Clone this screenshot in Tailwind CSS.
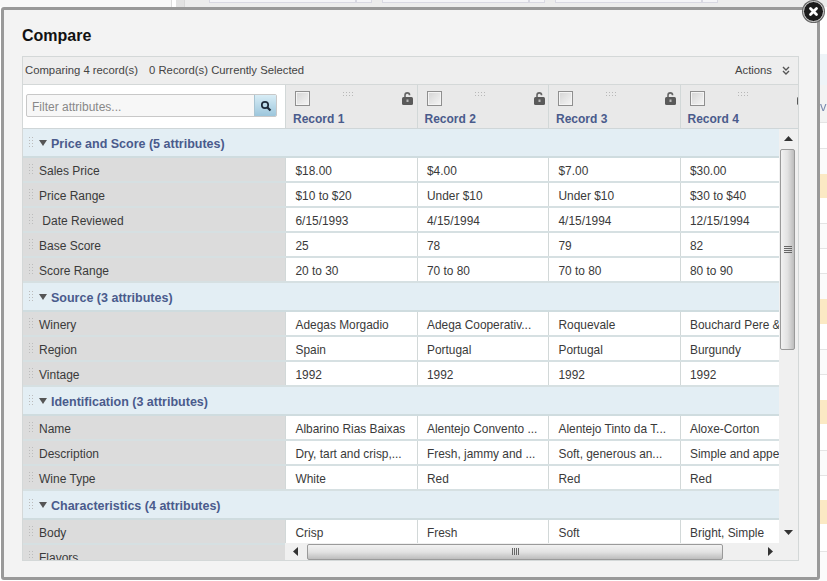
<!DOCTYPE html>
<html lang="en">
<head>
  <meta charset="UTF-8" />
  <title>Compare</title>
  <script src="https://cdn.jsdelivr.net/npm/@tailwindcss/browser@4"></script>
</head>
<body class="w-[827px] h-[581px] overflow-hidden bg-white font-['Liberation_Sans',Arial,sans-serif] text-[12px] text-[#3a3a3a]">
<div class="relative w-[827px] h-[581px] blur-[0.4px]">

  <!-- page behind the dialog -->
  <div class="h-[7px] flex">
    <div class="w-[172px] bg-[#f8f8f8] border-r border-[#ddd]"></div>
    <div class="w-[4px] bg-white"></div>
    <div class="w-[8px] bg-[#e2e2e2]"></div>
    <div class="flex-1 flex pl-[24px] bg-[#ececec] border-l border-[#d8d8d8]">
      <div class="w-[147px] h-[3px] bg-[#f4f4f7] border border-t-0 border-[#d8d8e2]"></div>
      <div class="w-[16px] h-[3px] bg-[#f4f4f7] border border-t-0 border-[#d8d8e2]"></div>
      <div class="ml-[10px] w-[147px] h-[3px] bg-[#f4f4f7] border border-t-0 border-[#d8d8e2]"></div>
      <div class="w-[16px] h-[3px] bg-[#f4f4f7] border border-t-0 border-[#d8d8e2]"></div>
      <div class="ml-[10px] w-[147px] h-[3px] bg-[#f4f4f7] border border-t-0 border-[#d8d8e2]"></div>
      <div class="w-[16px] h-[3px] bg-[#f4f4f7] border border-t-0 border-[#d8d8e2]"></div>
    </div>
  </div>
  <div class="flex flex-col items-end mt-[47px]">
    <div class="w-[7px] h-[31px] bg-[#eef4f8]"></div>
    <div class="w-[7px] h-[37px] bg-[#f3f3f3] text-[13px] leading-[44px] text-[#7d8cb0] overflow-hidden">v</div>
    <div class="w-[7px] h-[26px] bg-white border-t border-[#e4e4e4]"></div>
    <div class="w-[7px] h-[26px] bg-[#fbfbfb] border-t border-[#e4e4e4]"></div>
    <div class="w-[7px] h-[24px] bg-[#fbe9c4]"></div>
    <div class="w-[7px] h-[25px] bg-white"></div>
    <div class="w-[7px] h-[25px] bg-[#fbfbfb] border-t border-[#e4e4e4]"></div>
    <div class="w-[7px] h-[25px] bg-white border-t border-[#e4e4e4]"></div>
    <div class="w-[7px] h-[26px] bg-[#fbfbfb] border-t border-[#e4e4e4]"></div>
    <div class="w-[7px] h-[25px] bg-[#fbe9c4]"></div>
    <div class="w-[7px] h-[25px] bg-white"></div>
    <div class="w-[7px] h-[25px] bg-[#fbfbfb] border-t border-[#e4e4e4]"></div>
    <div class="w-[7px] h-[26px] bg-white border-t border-[#e4e4e4]"></div>
    <div class="w-[7px] h-[24px] bg-[#fbe9c4]"></div>
    <div class="w-[7px] h-[26px] bg-white"></div>
    <div class="w-[7px] h-[25px] bg-[#fbfbfb] border-t border-[#e4e4e4]"></div>
    <div class="w-[7px] h-[25px] bg-white border-t border-[#e4e4e4]"></div>
    <div class="w-[7px] h-[24px] bg-[#fbe9c4]"></div>
    <div class="w-[7px] h-[27px] bg-white"></div>
    <div class="w-[7px] h-[30px] bg-[#fbfbfb] border-t border-[#e4e4e4]"></div>
  </div>

  <!-- dialog -->
  <div class="absolute left-[1px] top-[7px] w-[819px] h-[573px] bg-[#f3f3f3] border-[3px] border-[#999] rounded-[3px]">
    <h1 class="ml-[18px] mt-[16px] h-[20px] leading-[20px] text-[16px] font-bold text-[#111]">Compare</h1>

    <div class="ml-[18px] mt-[10px] w-[777px] h-[505px] border border-[#d4d8d8] bg-[#eeeeee] flex flex-col">
      <!-- toolbar -->
      <div class="h-[28px] shrink-0 flex items-center pl-[2px] pr-[8px] text-[11.3px] border-b border-[#d4d8d8] text-[#444]">
        <span>Comparing 4 record(s)</span>
        <span class="ml-[11px]">0 Record(s) Currently Selected</span>
        <span class="ml-auto">Actions</span>
        <svg class="ml-[10px]" width="8" height="9" viewBox="0 0 8 9" fill="none" stroke="#555" stroke-width="1.4"><path d="M1 1l3 3 3-3M1 5l3 3 3-3"/></svg>
      </div>

      <!-- header row -->
      <div class="h-[44px] shrink-0 flex overflow-hidden border-b border-[#cfd6d8]">
        <div class="w-[262px] shrink-0 bg-white flex items-center pl-[3px]">
          <div class="w-[251px] h-[23px] mt-[-2px] flex rounded-[2px] border border-[#c8c8c8] bg-[#f7f7f7] overflow-hidden">
            <span class="flex-1 pl-[5px] leading-[24px] text-[#888]">Filter attributes...</span>
            <span class="w-[22px] flex items-center justify-center bg-linear-to-b from-[#d8edf6] to-[#9cc6dc] border-l border-[#a8c4d2]">
              <svg width="12" height="12" viewBox="0 0 12 12" fill="none" stroke="#1d2a3a"><circle cx="5" cy="5" r="3.2" stroke-width="1.7"/><path d="M7.5 7.5l3 3" stroke-width="2.2"/></svg>
            </span>
          </div>
        </div>
        <div id="heads" class="flex"></div>
      </div>

      <!-- body -->
      <div class="relative flex-1 overflow-hidden">
        <div id="rows" class="w-[757px] overflow-hidden"></div>

        <!-- vertical scrollbar -->
        <div class="absolute right-0 top-0 w-[19px] h-[415px] bg-[#f0f0f0] flex flex-col items-center">
          <svg class="mt-[7px] shrink-0" width="9" height="5" viewBox="0 0 9 5" fill="#333"><path d="M4.5 0l4.5 5H0z"/></svg>
          <div class="mt-[8px] ml-[-2px] w-[15px] h-[201px] rounded-[2px] border border-[#9a9a9a] bg-linear-to-r from-[#f2f2f2] via-[#e2e2e2] to-[#bdbdbd] flex flex-col items-center justify-center gap-[1px]">
            <i class="block w-[8px] h-[1px] bg-[#666]"></i><i class="block w-[8px] h-[1px] bg-[#666]"></i><i class="block w-[8px] h-[1px] bg-[#666]"></i><i class="block w-[8px] h-[1px] bg-[#666]"></i>
          </div>
          <svg class="mt-auto mb-[9px] shrink-0" width="9" height="5" viewBox="0 0 9 5" fill="#333"><path d="M4.5 5L9 0H0z"/></svg>
        </div>

        <!-- horizontal scrollbar -->
        <div class="absolute left-[262px] bottom-0 w-[514px] h-[17px] bg-[#f0f0f0] flex items-center">
          <svg class="ml-[8px] shrink-0" width="5" height="9" viewBox="0 0 5 9" fill="#333"><path d="M0 4.5L5 0v9z"/></svg>
          <div class="ml-[9px] w-[416px] h-[16px] rounded-[2px] border border-[#9a9a9a] bg-linear-to-b from-[#f2f2f2] via-[#e2e2e2] to-[#bdbdbd] flex items-center justify-center gap-[1px]">
            <i class="block w-[1px] h-[7px] bg-[#666]"></i><i class="block w-[1px] h-[7px] bg-[#666]"></i><i class="block w-[1px] h-[7px] bg-[#666]"></i><i class="block w-[1px] h-[7px] bg-[#666]"></i>
          </div>
          <svg class="ml-[45px] shrink-0" width="5" height="9" viewBox="0 0 5 9" fill="#333"><path d="M5 4.5L0 0v9z"/></svg>
        </div>
      </div>
    </div>
  </div>

  <!-- close button -->
  <div class="absolute left-[803px] top-[1px] w-[21px] h-[21px] rounded-full bg-[#1c1c1c] border border-[#dcdcdc] ring-1 ring-[#666] flex items-center justify-center">
    <svg width="11" height="11" viewBox="0 0 11 11" stroke="#fff" stroke-width="2.8" stroke-linecap="round"><path d="M2.5 2.5l6 6M8.5 2.5l-6 6"/></svg>
  </div>
</div>

  <script>
    const grip = '<span class="block shrink-0 w-[6px] h-[13px] bg-[radial-gradient(#bcbcbc_0.8px,transparent_0.9px)] bg-[length:3px_3px]"></span>';

    const groups = [
      ["Price and Score (5 attributes)", [
        ["Sales Price", "$18.00", "$4.00", "$7.00", "$30.00"],
        ["Price Range", "$10 to $20", "Under $10", "Under $10", "$30 to $40"],
        ["&nbsp;Date Reviewed", "6/15/1993", "4/15/1994", "4/15/1994", "12/15/1994"],
        ["Base Score", "25", "78", "79", "82"],
        ["Score Range", "20 to 30", "70 to 80", "70 to 80", "80 to 90"],
      ]],
      ["Source (3 attributes)", [
        ["Winery", "Adegas Morgadio", "Adega Cooperativ...", "Roquevale", "Bouchard Pere & Fils"],
        ["Region", "Spain", "Portugal", "Portugal", "Burgundy"],
        ["Vintage", "1992", "1992", "1992", "1992"],
      ]],
      ["Identification (3 attributes)", [
        ["Name", "Albarino Rias Baixas", "Alentejo Convento ...", "Alentejo Tinto da T...", "Aloxe-Corton"],
        ["Description", "Dry, tart and crisp,...", "Fresh, jammy and ...", "Soft, generous an...", "Simple and appealing"],
        ["Wine Type", "White", "Red", "Red", "Red"],
      ]],
      ["Characteristics (4 attributes)", [
        ["Body", "Crisp", "Fresh", "Soft", "Bright, Simple"],
        ["Flavors", "", "", "", ""],
      ]],
    ];

    document.getElementById("heads").innerHTML = [1, 2, 3, 4].map((n, i) => `
      <div class="relative ${i === 3 ? 'w-[120px]' : 'w-[131.5px]'} shrink-0 bg-[#e9e9e9] border-l border-[#d2d8d8] overflow-hidden">
        <span class="absolute left-[9px] top-[6px] w-[15px] h-[15px] border border-[#8f8f8f] bg-linear-to-br from-[#d4d4d4] to-[#f6f6f6] shadow-[inset_0_0_0_1px_#f4f4f4]"></span>
        <span class="absolute left-[56px] top-[6px] w-[13px] h-[5px] bg-[radial-gradient(#b8b8b8_0.7px,transparent_0.8px)] bg-[length:3px_3px]"></span>
        <svg class="absolute left-[116px] top-[7px]" width="11" height="13" viewBox="0 0 11 13"><path d="M3 5.5V3.2a2.3 2.3 0 0 1 4.6 0" fill="none" stroke="#666" stroke-width="1.6"/><rect x="0" y="5" width="11" height="8" rx="1.5" fill="#5a5a5a"/><rect x="4.5" y="7.5" width="2" height="2.5" fill="#bbb"/></svg>
        <span class="absolute left-[7px] top-[27px] font-bold text-[12px] leading-[14px] text-[#4a5b8c]">Record ${n}</span>
      </div>`).join("");

    document.getElementById("rows").innerHTML = groups.map(([title, rows]) => `
      <div class="h-[29px] flex items-center pl-[5px] bg-[#e3eef4] border-b-2 border-[#cfdcdf]">
        ${grip}
        <svg class="ml-[5px] mr-[4px] shrink-0" width="8" height="6" viewBox="0 0 8 6" fill="#555"><path d="M0 0h8L4 6z"/></svg>
        <span class="pt-[4px] font-bold text-[12.5px] text-[#4a5b8c]">${title}</span>
      </div>
      ${rows.map(r => `
        <div class="h-[25px] flex border-b-2 border-[#d6e0e2]">
          <div class="w-[262px] shrink-0 flex items-center pl-[5px] bg-[#dcdcdc]">${grip}<span class="ml-[5px] pt-[3px]">${r[0]}</span></div>
          ${r.slice(1).map(c => `<div class="w-[131.5px] shrink-0 pl-[9.5px] pt-[5px] flex items-center whitespace-nowrap overflow-hidden bg-white border-l border-[#d2d8d8] text-[11.9px]">${c}</div>`).join("")}
        </div>`).join("")}`).join("");
  </script>
</body>
</html>
